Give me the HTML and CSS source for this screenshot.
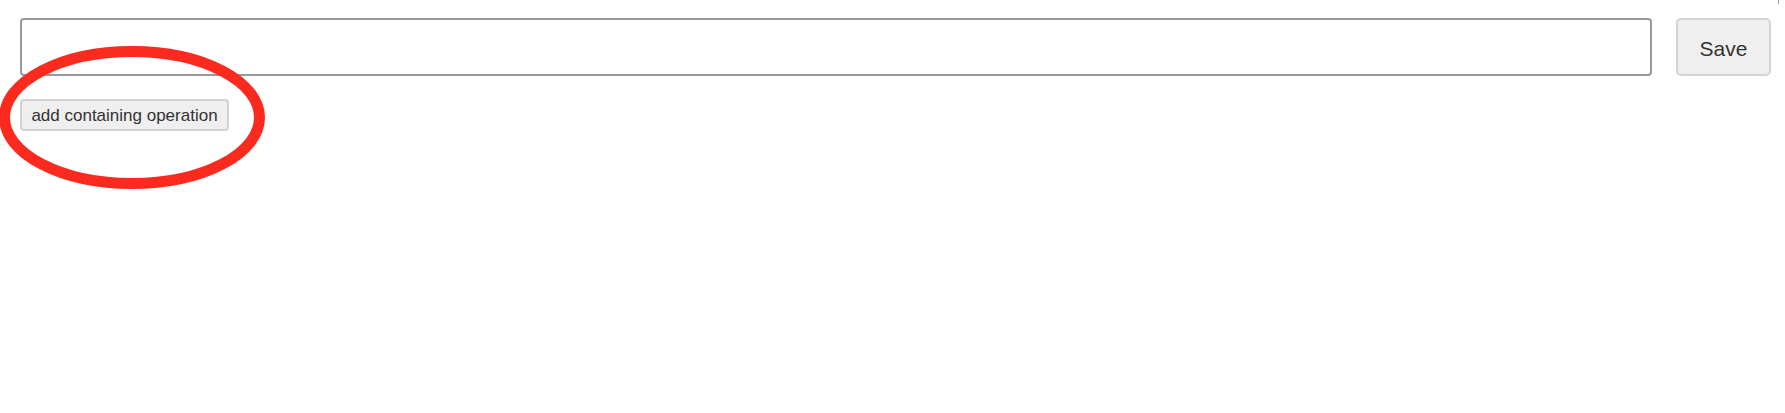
FILE: index.html
```html
<!DOCTYPE html>
<html>
<head>
<meta charset="utf-8">
<link rel="stylesheet" href="styles.css">
</head>
<body>
<div class="page">
  <div class="row">
    <input class="field" type="text">
    <button class="save">Save</button>
  </div>
  <div class="actions">
    <button class="add">add containing operation</button>
  </div>
  <svg class="annot" width="280" height="200" viewBox="0 0 280 200">
    <ellipse cx="132" cy="117.5" rx="127.5" ry="66" fill="none" stroke="#fb2a1f" stroke-width="11"/>
  </svg>
  <span class="tick"></span>
</div>
</body>
</html>
```
FILE: styles.css
```css
html, body {
  margin: 0;
  padding: 0;
  background: #fff;
}
.page {
  position: relative;
  width: 1785px;
  height: 413px;
  box-sizing: border-box;
  padding: 18px 14px 0 20px;
  font-family: "Liberation Sans", Arial, sans-serif;
}
.row {
  display: flex;
  gap: 24px;
  align-items: stretch;
}
.field {
  flex: 1;
  height: 58px;
  box-sizing: border-box;
  border: 2px solid #999;
  border-radius: 4px;
  background: #fff;
  margin: 0;
  padding: 0 10px;
  outline: none;
}
.save {
  width: 95px;
  height: 58px;
  box-sizing: border-box;
  border: 2px solid #d4d4d4;
  border-radius: 5px;
  background: #efefef;
  color: #333;
  font-family: "Liberation Sans", Arial, sans-serif;
  font-size: 21px;
  margin: 0;
  padding: 4px 0 0 0;
}
.actions {
  margin-top: 23px;
  display: flex;
}
.add {
  width: 209px;
  height: 32px;
  box-sizing: border-box;
  border: 2px solid #d2d2d2;
  border-radius: 4px;
  background: #efefef;
  color: #333;
  font-family: "Liberation Sans", Arial, sans-serif;
  font-size: 17px;
  margin: 0;
  padding: 2px 0 0 0;
}
.annot {
  position: absolute;
  left: 0;
  top: 0;
}
.tick {
  position: absolute;
  left: 1778px;
  top: 0;
  width: 1px;
  height: 4px;
  background: #999;
}
```
